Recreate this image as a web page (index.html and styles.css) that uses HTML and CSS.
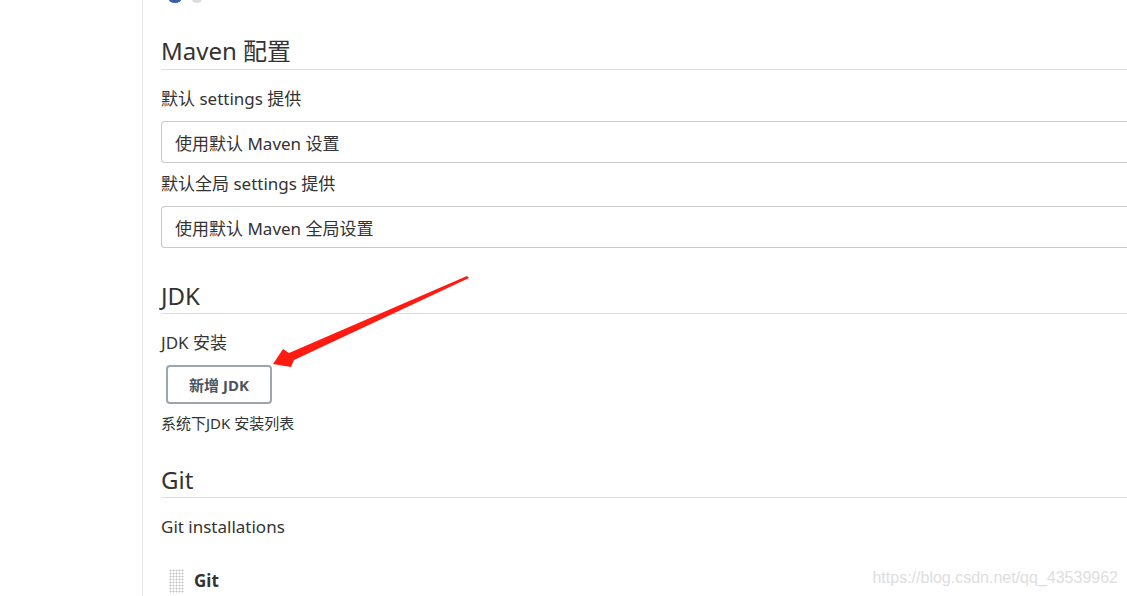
FILE: index.html
```html
<!DOCTYPE html>
<html lang="zh-CN">
<head>
  <meta charset="UTF-8" />
  <title>全局工具配置</title>
  <link rel="stylesheet" href="styles.css">
</head>
<body>
  <div class="page">
    <aside class="side"></aside>

    <main class="main">
      <span class="top-icon"></span>

      <h2 class="section-title first">Maven 配置</h2>
      <label class="field-label">默认 settings 提供</label>
      <div class="select">使用默认 Maven 设置</div>
      <label class="field-label second">默认全局 settings 提供</label>
      <div class="select">使用默认 Maven 全局设置</div>

      <h2 class="section-title">JDK</h2>
      <label class="field-label">JDK 安装</label>
      <button class="add-btn" type="button">新增 JDK</button>
      <div class="help">系统下JDK 安装列表</div>

      <h2 class="section-title after-help">Git</h2>
      <label class="field-label">Git installations</label>
      <div class="repeat-item">
        <span class="handle"></span>
        <span class="item-name">Git</span>
      </div>
    </main>
  </div>

  <!-- annotation arrow from the screenshot -->
  <svg class="arrow" width="1127" height="596" viewBox="0 0 1127 596">
    <polygon fill="#ff1a12" points="273,364 283,349 289,353 467,276 469,278 294,360 291,367" />
  </svg>

  <div class="watermark">https://blog.csdn.net/qq_43539962</div>
</body>
</html>
```

FILE: styles.css
```css
* {
  box-sizing: border-box;
  margin: 0;
  padding: 0;
}

html, body {
  height: 100%;
}

body {
  font-family: 'Noto Sans', 'Noto Sans CJK SC', sans-serif;
  color: #333;
  background: #fff;
  overflow: hidden;
  position: relative;
}

.page {
  display: flex;
  min-height: 100%;
}

.side {
  width: 143px;
  flex-shrink: 0;
  border-right: 1px solid #e6e6e6;
}

.main {
  position: relative;
  flex: 1;
  min-width: 0;
  padding-left: 18px;
}

.top-icon {
  position: absolute;
  left: 25px;
  top: -8px;
  width: 14px;
  height: 11px;
  border-radius: 50%;
  background: #3a5fa8;
  box-shadow: 22px 2px 0 -2px #ddd;
}

.section-title {
  font-size: 24px;
  font-weight: normal;
  line-height: 32px;
  padding-bottom: 1px;
  margin-top: 32px;
  border-bottom: 1px solid #dedede;
}

.section-title.first {
  margin-top: 35px;
  padding-bottom: 2px;
}

.section-title.after-help {
  margin-top: 31px;
}

.field-label {
  display: block;
  font-size: 17px;
  line-height: 24px;
  margin-top: 17px;
}

.field-label.second {
  margin-top: 9px;
}

/* the select runs past the right edge of the frame, so no right border */
.select {
  margin-top: 10px;
  height: 42px;
  border: 1px solid #c8c8c8;
  border-right: none;
  border-radius: 4px 0 0 4px;
  padding: 0 13px;
  display: flex;
  align-items: center;
  font-size: 17px;
}

.add-btn {
  display: block;
  margin: 10px 0 0 5px;
  width: 106px;
  height: 39px;
  border: 2px solid #9ba6ae;
  border-radius: 4px;
  background: #fff;
  color: #4d545d;
  font-family: 'Noto Sans', 'Noto Sans CJK SC', sans-serif;
  font-size: 15px;
  font-weight: bold;
}

.help {
  margin-top: 9px;
  font-size: 15px;
  line-height: 20px;
}

.repeat-item {
  margin-top: 30px;
  display: flex;
  align-items: center;
  gap: 10px;
  padding-left: 8px;
}

.handle {
  width: 15px;
  height: 24px;
  background-image: radial-gradient(circle, #c2c2c2 0.9px, transparent 1.1px);
  background-size: 3px 3px;
}

.item-name {
  font-size: 17px;
  font-weight: bold;
  line-height: 24px;
}

.arrow {
  position: absolute;
  left: 0;
  top: 0;
  pointer-events: none;
}

.watermark {
  position: absolute;
  right: 9px;
  bottom: 9px;
  font-family: 'Liberation Sans', Arial, sans-serif;
  font-size: 16px;
  color: #dedede;
}
```
